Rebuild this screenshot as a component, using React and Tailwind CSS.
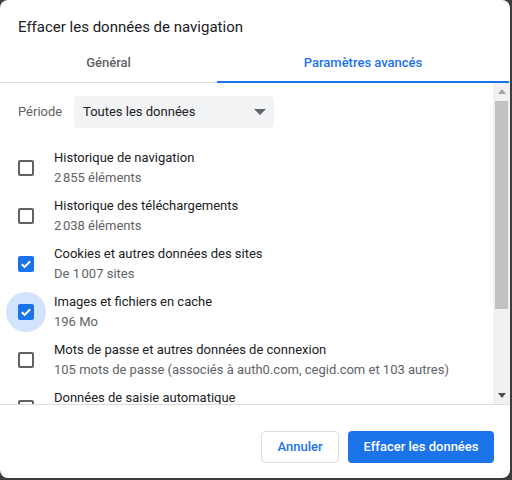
import React from 'react';

const items = [
  { title: 'Historique de navigation', sub: '2\u202f855 éléments', checked: false },
  { title: 'Historique des téléchargements', sub: '2\u202f038 éléments', checked: false },
  { title: 'Cookies et autres données des sites', sub: 'De 1\u202f007 sites', checked: true },
  { title: 'Images et fichiers en cache', sub: '196 Mo', checked: true, focus: true },
  { title: 'Mots de passe et autres données de connexion', sub: '105 mots de passe (associés à auth0.com, cegid.com et 103 autres)', checked: false },
  { title: 'Données de saisie automatique', sub: '\u00a0', checked: false },
];

function Checkbox({ checked, focus }) {
  return (
    <div className="relative w-[16px] h-[16px] shrink-0">
      {focus && <div className="absolute -left-[12px] -top-[12px] w-[40px] h-[40px] rounded-full bg-[#d2e3fc]" />}
      {checked ? (
        <div className="relative w-[16px] h-[16px] rounded-[2px] bg-[#1a73e8]">
          <svg width="16" height="16" viewBox="0 0 16 16" className="absolute inset-0">
            <path d="M3.8 8.2 L6.6 10.9 L12.2 5.3" fill="none" stroke="white" strokeWidth="2" />
          </svg>
        </div>
      ) : (
        <div className="relative w-[16px] h-[16px] rounded-[2px] border-2 border-[#5f6368]" />
      )}
    </div>
  );
}

export default function App() {
  return (
    <div className="w-[512px] h-[480px] bg-[#3c3c3c] overflow-hidden" style={{ fontFamily: 'Roboto, "Liberation Sans", sans-serif' }}>
      <div className="w-[510px] h-[478px] bg-white rounded-[8px] flex flex-col overflow-hidden">
        <div className="h-[44px] pl-[18px] pt-[17px] text-[15px] leading-[20px] text-[#202124]">
          Effacer les données de navigation
        </div>
        <div className="flex h-[39px] border-b border-[#dadce0] text-[13px] font-medium">
          <div className="w-[217px] flex items-center justify-center text-[#5f6368]">Général</div>
          <div className="flex-1 flex items-center justify-center text-[#1a73e8] border-b-2 border-[#1a73e8] -mb-px mr-[1px]">
            Paramètres avancés
          </div>
        </div>
        <div className="flex h-[322px] border-b border-[#dadce0]">
          <div className="flex-1 overflow-hidden">
            <div className="flex items-center pl-[18px] pt-[13px]">
              <span className="text-[13px] text-[#5f6368] w-[56px]">Période</span>
              <div className="w-[200px] h-[32px] rounded-[4px] bg-[#f1f3f4] flex items-center justify-between pl-[9px] pr-[8px] text-[13px] text-[#202124]">
                <span>Toutes les données</span>
                <svg width="12" height="6" viewBox="0 0 12 6"><path d="M0 0 L12 0 L6 6 Z" fill="#5f6368" /></svg>
              </div>
            </div>
            <div className="pt-[16px]">
              {items.map((it) => (
                <div key={it.title} className="flex items-center h-[48px] pl-[18px]">
                  <Checkbox checked={it.checked} focus={it.focus} />
                  <div className="pl-[20px] text-[13px] leading-[20px] whitespace-nowrap">
                    <div className="text-[#202124]">{it.title}</div>
                    <div className="text-[#5f6368]">{it.sub}</div>
                  </div>
                </div>
              ))}
            </div>
          </div>
          <div className="w-[17px] bg-[#f1f1f1] flex flex-col items-center">
            <div className="h-[17px] flex items-center justify-center">
              <svg width="8" height="5" viewBox="0 0 8 5"><path d="M0 5 L8 5 L4 0 Z" fill="#a3a3a3" /></svg>
            </div>
            <div className="w-[13px] h-[208px] bg-[#c1c1c1] mt-[1px]" />
            <div className="flex-1" />
            <div className="h-[17px] flex items-center justify-center">
              <svg width="8" height="5" viewBox="0 0 8 5"><path d="M0 0 L8 0 L4 5 Z" fill="#505050" /></svg>
            </div>
          </div>
        </div>
        <div className="flex-1 flex justify-end items-start pt-[26px] pr-[16px] gap-[9px]">
          <button className="w-[78px] h-[32px] rounded-[4px] border border-[#dadce0] text-[13px] font-medium text-[#1a73e8] bg-white">
            Annuler
          </button>
          <button className="w-[146px] h-[32px] rounded-[4px] bg-[#1a73e8] text-[13px] font-medium text-white">
            Effacer les données
          </button>
        </div>
      </div>
    </div>
  );
}
